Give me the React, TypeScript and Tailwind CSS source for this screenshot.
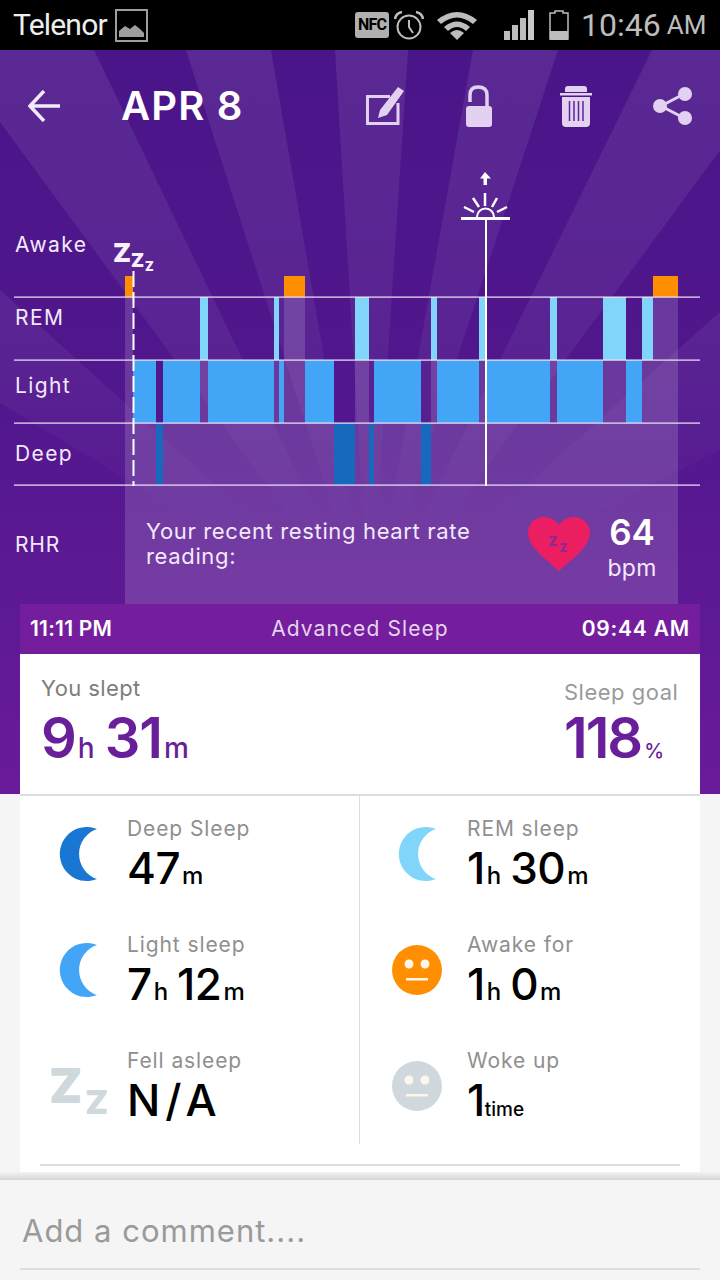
const fontUi = { fontFamily: 'Inter, "Noto Sans", sans-serif' };

type Stage = 'awake' | 'rem' | 'light' | 'deep';

const stageTop: Record<Stage, number> = { awake: 276, rem: 297, light: 360, deep: 423 };
const stageBottom: Record<Stage, number> = { awake: 297, rem: 360, light: 423, deep: 485 };
const stageColor: Record<Stage, string> = {
  awake: '#ff8f00',
  rem: '#81d4fa',
  light: '#42a5f5',
  deep: '#1769be',
};

const segments: [number, number, Stage][] = [
  [125, 133, 'awake'],
  [133, 156, 'light'],
  [156, 163, 'deep'],
  [163, 200, 'light'],
  [200, 208, 'rem'],
  [208, 274, 'light'],
  [274, 279, 'rem'],
  [279, 284, 'light'],
  [284, 305, 'awake'],
  [305, 334, 'light'],
  [334, 355, 'deep'],
  [355, 369, 'rem'],
  [369, 374, 'deep'],
  [374, 421, 'light'],
  [421, 431, 'deep'],
  [431, 437, 'rem'],
  [437, 479, 'light'],
  [479, 486, 'rem'],
  [486, 550, 'light'],
  [550, 557, 'rem'],
  [557, 603, 'light'],
  [603, 626, 'rem'],
  [626, 642, 'light'],
  [642, 653, 'rem'],
  [653, 678, 'awake'],
];

const rays = [
  '370,625 -53,50 94,50',
  '370,625 186,50 271,50',
  '370,625 335,50 408,50',
  '370,625 473,50 558,50',
  '370,625 652,50 794,50',
  '370,625 0,290 0,403',
  '370,625 720,312 720,450',
];

function StatusBar() {
  return (
    <div className="flex h-[50px] items-center bg-black text-[#bdbdbd]" style={{ fontFamily: 'Roboto, sans-serif' }}>
      <span className="ml-[13px] w-[102px] text-[30px] leading-none tracking-[-0.8px] text-[#eeeeee]">Telenor</span>
      <svg width="33" height="33" viewBox="0 0 33 33" className="shrink-0">
        <rect x="1" y="1" width="31" height="31" fill="none" stroke="#9e9e9e" strokeWidth="2" />
        <path d="M4 28 V22 L10 17 L15 20 L20 16 L25 20 L29 24 V28 Z" fill="#9e9e9e" />
      </svg>
      <div className="ml-[207px] flex h-[26px] w-[34px] items-center justify-center rounded-[3px] bg-[#b0b0b0] text-[16px] font-bold leading-none tracking-[-0.8px] text-black">
        NFC
      </div>
      <svg width="32" height="30" viewBox="0 0 32 30" className="ml-[4px] shrink-0" fill="none" stroke="#bdbdbd">
        <circle cx="16" cy="17" r="11.5" strokeWidth="2" />
        <path d="M16 10 V17 L20 23" strokeWidth="2" />
        <path d="M2 9 Q3 3 9 2 M30 9 Q29 3 23 2" strokeWidth="2.5" />
      </svg>
      <svg width="40" height="30" viewBox="0 0 40 30" className="ml-[12px] shrink-0" fill="#bdbdbd">
        <path d="M0 10 Q20 -6 40 10 L36 14 Q20 1 4 14 Z" />
        <path d="M7 17 Q20 6 33 17 L29 21 Q20 13 11 21 Z" />
        <path d="M13 23 Q20 17 27 23 L20 30 Z" />
      </svg>
      <svg width="30" height="30" viewBox="0 0 30 30" className="ml-[27px] shrink-0" fill="#bdbdbd">
        <rect x="0" y="21" width="6" height="9" />
        <rect x="8" y="15" width="6" height="15" />
        <rect x="16" y="8" width="6" height="22" />
        <rect x="24" y="0" width="6" height="30" fill="#c8c8c8" />
      </svg>
      <svg width="20" height="30" viewBox="0 0 20 30" className="ml-[15px] shrink-0">
        <path d="M6 1 H14 V3 H19 V29 H1 V3 H6 Z" fill="none" stroke="#bdbdbd" strokeWidth="1.5" />
        <rect x="1" y="21" width="18" height="9" fill="#bdbdbd" />
      </svg>
      <span className="ml-[12px] text-[32px] leading-none">10:46</span>
      <span className="ml-[6px] text-[26px] leading-none">AM</span>
    </div>
  );
}

function TopBar() {
  return (
    <div className="relative flex h-[112px] items-center">
      <svg width="32" height="32" viewBox="0 0 32 32" className="ml-[28px] shrink-0" fill="none" stroke="#f3e9fa" strokeWidth="3.5">
        <path d="M32 16 H2 M16 1 L2 16 L16 31" />
      </svg>
      <span className="ml-[61px] w-[245px] text-[40px] font-semibold leading-none tracking-[1.2px] text-white" style={fontUi}>
        APR 8
      </span>
      <svg width="38" height="38" viewBox="0 0 38 38" className="shrink-0">
        <path d="M24 9.5 H1.5 V36.5 H32 V16" fill="none" stroke="#e3d1f1" strokeWidth="3" />
        <path d="M32 0 L38 4 L21 28 L12 31 L14 23 Z" fill="#e3d1f1" />
      </svg>
      <svg width="26" height="42" viewBox="0 0 26 42" className="ml-[62px] shrink-0" fill="none">
        <path d="M4 17 V10 Q4 2 12 2 Q21 2 21 10 V22" stroke="#e3d1f1" strokeWidth="3.5" />
        <rect x="0" y="21" width="26" height="21" rx="3" fill="#e3d1f1" />
      </svg>
      <svg width="32" height="41" viewBox="0 0 32 41" className="ml-[68px] shrink-0">
        <path d="M5 3 Q5 0 8 0 H24 Q27 0 27 3 V6 H5 Z" fill="#e3d1f1" />
        <rect x="0" y="7" width="32" height="2.5" fill="#e3d1f1" />
        <path d="M2 11 H30 V37 Q30 41 26 41 H6 Q2 41 2 37 Z" fill="#e3d1f1" />
        <path d="M9.5 15 V35 M14 15 V35 M18.5 15 V35 M23 15 V35" stroke="#5a2596" strokeWidth="1.5" />
      </svg>
      <svg width="39" height="38" viewBox="0 0 39 38" className="ml-[61px] shrink-0" fill="#e3d1f1">
        <path d="M31 7 L8 19 L31 31" fill="none" stroke="#e3d1f1" strokeWidth="3" />
        <circle cx="32" cy="7" r="7" />
        <circle cx="7" cy="19" r="7" />
        <circle cx="32" cy="31" r="7" />
      </svg>
    </div>
  );
}

function SleepChart() {
  const labelClass = 'fill-[#f3e9fa] text-[21px] tracking-[1.4px]';
  return (
    <svg width="720" height="324" viewBox="0 162 720 324" className="block" style={fontUi}>
      {segments.map(([x0, x1, stage]) => (
        <g key={x0}>
          <rect x={x0} y={stageBottom[stage]} width={x1 - x0} height={486 - stageBottom[stage]} fill="#ffffff" fillOpacity="0.15" />
          <rect x={x0} y={stageTop[stage]} width={x1 - x0} height={stageBottom[stage] - stageTop[stage]} fill={stageColor[stage]} />
        </g>
      ))}
      {[297, 360, 423, 485].map((y) => (
        <rect key={y} x="14" y={y - 0.5} width="686" height="1.2" fill="#f3e6f8" />
      ))}
      <text x="15" y="252" className={labelClass}>Awake</text>
      <text x="15" y="325" className={labelClass}>REM</text>
      <text x="15" y="393" className={labelClass}>Light</text>
      <text x="15" y="461" className={labelClass}>Deep</text>

      <path d="M133.5 271 V486" stroke="#ffffff" strokeWidth="2" strokeDasharray="16 5" />
      <text x="113" y="262" className="fill-[#f8f1fb] text-[26px] font-black">Z</text>
      <text x="131" y="267" className="fill-[#f8f1fb] text-[19px] font-black">Z</text>
      <text x="145" y="271" className="fill-[#f8f1fb] text-[12.5px] font-black">Z</text>

      <path d="M486 220 V486" stroke="#ffffff" strokeWidth="2" />
      <rect x="461" y="217" width="49" height="3" fill="#ffffff" />
      <path d="M477 217 A8.5 8.5 0 0 1 494 217" fill="none" stroke="#ffffff" strokeWidth="2" />
      <path d="M485 206 V193 M479 207 L473 198 M492 207 L497 198 M474 212 L464 207 M497 212 L507 207" stroke="#ffffff" strokeWidth="2.5" />
      <path d="M485 172 L491 178.5 H487 V185 H483.5 V178.5 H480 Z" fill="#ffffff" />
    </svg>
  );
}

function RhrRow() {
  return (
    <div className="flex h-[118px]" style={fontUi}>
      <div className="flex w-[125px] items-center pl-[15px] text-[21px] tracking-[0.8px] text-[#f3e9fa]">RHR</div>
      <div className="flex w-[553px] bg-white/15">
        <p className="ml-[21px] mt-[33px] w-[370px] text-[22px] leading-[25px] tracking-[0.65px] text-[#f3e9fa]">
          Your recent resting heart rate reading:
        </p>
        <svg width="62" height="54" viewBox="0 0 62 54" className="ml-[12px] mt-[31px] shrink-0">
          <path d="M31 54 C20 44 0 30 0 16 C0 6 8 0 16 0 C23 0 28 4 31 8 C34 4 39 0 46 0 C54 0 62 6 62 16 C62 30 42 44 31 54 Z" fill="#ec1e62" />
          <text x="20" y="29" fill="#8e2a8f" fontSize="17" fontWeight="700">z</text>
          <text x="31" y="35" fill="#8e2a8f" fontSize="15" fontWeight="700">z</text>
        </svg>
        <div className="ml-[15px] mt-[25px] flex w-[54px] flex-col items-center text-white">
          <span className="text-[35px] font-semibold leading-[42px]">64</span>
          <span className="mt-[2px] text-[23px] leading-[26px] tracking-[0.3px] text-[#f3e9fa]">bpm</span>
        </div>
      </div>
    </div>
  );
}

function SummaryCard() {
  return (
    <div className="mx-[20px]" style={fontUi}>
      <div className="flex h-[50px] items-center justify-between bg-[#741e9e] px-[10px] text-[21px] text-white">
        <span className="w-[120px] whitespace-nowrap font-semibold tracking-[0.2px]">11:11 PM</span>
        <span className="whitespace-nowrap tracking-[1.1px] text-[#e6d3f0]">Advanced Sleep</span>
        <span className="w-[120px] whitespace-nowrap text-right font-semibold tracking-[0.8px]">09:44 AM</span>
      </div>
      <div className="flex h-[140px] justify-between bg-white pl-[21px] pr-[22px] text-[#6a1f9a]">
        <div className="pt-[21px]">
          <div className="text-[22px] leading-[26px] tracking-[0.4px] text-[#7d7d7d]">You slept</div>
          <div className="mt-[6px] flex items-baseline font-semibold leading-[62px]">
            <span className="text-[56px] tracking-[-1px]">9</span>
            <span className="ml-[2px] text-[28px] font-medium">h</span>
            <span className="ml-[10px] text-[56px] tracking-[-1px]">31</span>
            <span className="ml-[2px] text-[28px] font-medium">m</span>
          </div>
        </div>
        <div className="w-[114px] pt-[25px]">
          <div className="whitespace-nowrap text-[22px] leading-[26px] tracking-[0.5px] text-[#9a9a9a]">Sleep goal</div>
          <div className="mt-[2px] flex items-baseline font-semibold leading-[62px]">
            <span className="text-[56px] tracking-[-2px]">118</span>
            <span className="ml-[3px] text-[20px] font-medium">%</span>
          </div>
        </div>
      </div>
    </div>
  );
}

function Moon({ color, className }: { color: string; className: string }) {
  return (
    <svg width="54" height="54" viewBox="0 0 54 54" className={className}>
      <path d="M39 2 A27 27 0 1 0 39 52 A26.4 26.4 0 0 1 39 2 Z" fill={color} />
    </svg>
  );
}

function Face({ color }: { color: string }) {
  return (
    <svg width="50" height="50" viewBox="0 0 50 50" className="ml-[32px]">
      <circle cx="25" cy="25" r="25" fill={color} />
      <circle cx="17" cy="19" r="4.5" fill="#fff6e8" />
      <circle cx="33" cy="19" r="4.5" fill="#fff6e8" />
      <rect x="14" y="33" width="22" height="2.5" fill="#fff6e8" />
    </svg>
  );
}

function Stat({
  icon,
  label,
  parts,
}: {
  icon: React.ReactNode;
  label: string;
  parts: [string, string][];
}) {
  return (
    <div className="flex h-[116px]">
      <div className="flex w-[107px] shrink-0 items-center">{icon}</div>
      <div className="pt-[20px]">
        <div className="text-[21px] leading-[26px] tracking-[0.9px] text-[#8f8f8f]">{label}</div>
        <div className="mt-[1px] flex items-baseline font-medium leading-[50px] text-black">
          {parts.map(([value, unit]) => (
            <span key={value + unit} className="mr-[9px]">
              <span className={value === 'N/A' ? 'text-[44px] tracking-[5px]' : 'text-[44px] tracking-[-0.5px]'}>{value}</span>
              <span className={unit === 'time' ? 'text-[19px]' : 'ml-[2px] text-[24px]'}>{unit}</span>
            </span>
          ))}
        </div>
      </div>
    </div>
  );
}

export default function App() {
  return (
    <div className="relative h-[1280px] w-[720px] overflow-hidden bg-[#f5f5f5]">
      <StatusBar />
      <div className="relative h-[744px] bg-gradient-to-b from-[#4a1589] via-[#52178e] to-[#6a1b9a]">
        <svg width="720" height="744" viewBox="0 50 720 744" className="absolute left-0 top-0">
          <defs>
            <linearGradient id="rayFade" gradientUnits="userSpaceOnUse" x1="0" y1="50" x2="0" y2="540">
              <stop offset="0" stopColor="#ffffff" stopOpacity="0.085" />
              <stop offset="0.6" stopColor="#ffffff" stopOpacity="0.055" />
              <stop offset="1" stopColor="#ffffff" stopOpacity="0" />
            </linearGradient>
          </defs>
          {rays.map((points) => (
            <polygon key={points} points={points} fill="url(#rayFade)" />
          ))}
        </svg>
        <div className="relative">
          <TopBar />
          <SleepChart />
          <RhrRow />
          <SummaryCard />
        </div>
      </div>
      <div className="mx-[20px] h-[378px] border-t-2 border-[#dddddd] bg-white" style={fontUi}>
        <div className="grid grid-cols-2">
          <div className="border-r border-[#dddddd]">
            <Stat icon={<Moon color="#1976d2" className="ml-[38px]" />} label="Deep Sleep" parts={[['47', 'm']]} />
            <Stat icon={<Moon color="#42a5f5" className="ml-[38px]" />} label="Light sleep" parts={[['7', 'h'], ['12', 'm']]} />
            <Stat
              icon={
                <div className="ml-[29px] flex items-baseline font-black leading-none text-[#cfd8dc]">
                  <span className="text-[48px]">Z</span>
                  <span className="ml-[3px] translate-y-[11px] text-[33px]">Z</span>
                </div>
              }
              label="Fell asleep"
              parts={[['N/A', '']]}
            />
          </div>
          <div>
            <Stat icon={<Moon color="#81d4fa" className="ml-[37px]" />} label="REM sleep" parts={[['1', 'h'], ['30', 'm']]} />
            <Stat icon={<Face color="#ff8f00" />} label="Awake for" parts={[['1', 'h'], ['0', 'm']]} />
            <Stat icon={<Face color="#cfd8dc" />} label="Woke up" parts={[['1', 'time']]} />
          </div>
        </div>
        <div className="mx-[20px] mt-[20px] h-[2px] bg-[#dddddd]" />
      </div>
      <div className="absolute bottom-0 left-0 w-full bg-[#f5f5f5]" style={fontUi}>
        <div className="h-[8px] bg-gradient-to-b from-[#f3f3f3] to-[#d6d6d6]" />
        <div className="mx-[20px] flex h-[90px] items-center border-b-2 border-[#dddddd] px-[2px] pt-[14px] text-[31px] tracking-[1px] text-[#9a9a9a]">
          Add a comment....
        </div>
        <div className="h-[10px]" />
      </div>
    </div>
  );
}
